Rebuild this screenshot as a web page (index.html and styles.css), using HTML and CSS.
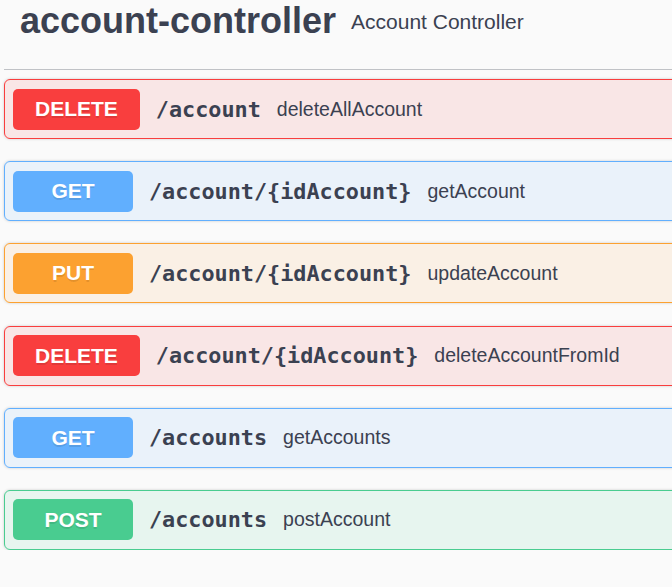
FILE: index.html
```html
<!DOCTYPE html>
<html>
<head>
<meta charset="utf-8">
<link rel="stylesheet" href="styles.css">
</head>
<body>
<div class="tag-section">
  <h4 class="tag-title"><span class="tag-name">account-controller</span><small class="tag-desc">Account Controller</small></h4>
  <div class="ops">
    <div class="op op-delete">
      <span class="method">DELETE</span>
      <span class="path">/account</span>
      <span class="summary">deleteAllAccount</span>
    </div>
    <div class="op op-get">
      <span class="method">GET</span>
      <span class="path">/account/{idAccount}</span>
      <span class="summary">getAccount</span>
    </div>
    <div class="op op-put">
      <span class="method">PUT</span>
      <span class="path">/account/{idAccount}</span>
      <span class="summary">updateAccount</span>
    </div>
    <div class="op op-delete">
      <span class="method">DELETE</span>
      <span class="path">/account/{idAccount}</span>
      <span class="summary">deleteAccountFromId</span>
    </div>
    <div class="op op-get">
      <span class="method">GET</span>
      <span class="path">/accounts</span>
      <span class="summary">getAccounts</span>
    </div>
    <div class="op op-post">
      <span class="method">POST</span>
      <span class="path">/accounts</span>
      <span class="summary">postAccount</span>
    </div>
  </div>
</div>
</body>
</html>
```
FILE: styles.css
```css
html, body {
  margin: 0;
  padding: 0;
  background: #fafafa;
  overflow: hidden;
}
body {
  font-family: "Liberation Sans", Arial, sans-serif;
  color: #3b4151;
}
.tag-section {
  margin-left: 4px;
  width: 740px;
}
.tag-title {
  margin: 0;
  display: flex;
  align-items: flex-start;
  padding: 0 45px 0 16px;
  height: 70px;
  border-bottom: 1px solid rgba(59, 65, 81, 0.3);
  box-sizing: border-box;
}
.tag-name {
  font-size: 36px;
  font-weight: bold;
  line-height: 36px;
  margin-top: 3px;
}
.tag-desc {
  font-size: 21px;
  font-weight: normal;
  line-height: 21px;
  margin-left: 15px;
  margin-top: 11px;
}
.ops {
  display: flex;
  flex-direction: column;
  gap: 22.2px;
  padding-top: 9px;
}
.op {
  display: flex;
  align-items: center;
  height: 58px;
  padding: 0 8px;
  border: 1px solid;
  border-radius: 6px;
  box-shadow: 0 0 3px rgba(0, 0, 0, 0.19);
}
.method {
  min-width: 120px;
  height: 41px;
  box-sizing: border-box;
  padding: 0 22px;
  border-radius: 5px;
  display: flex;
  align-items: center;
  justify-content: center;
  color: #fff;
  font-family: "Liberation Sans", Arial, sans-serif;
  font-weight: bold;
  font-size: 21px;
  text-shadow: 0 1.5px 0 rgba(0, 0, 0, 0.1);
}
.path {
  font-family: "DejaVu Sans Mono", monospace;
  font-weight: bold;
  font-size: 21.8px;
  padding: 0 16px;
  color: #3b4151;
}
.summary {
  font-size: 19.5px;
  color: #3b4151;
}
.op-delete { border-color: #f93e3e; background: rgba(249, 62, 62, 0.1); }
.op-delete .method { background: #f93e3e; }
.op-get { border-color: #61affe; background: rgba(97, 175, 254, 0.1); }
.op-get .method { background: #61affe; }
.op-put { border-color: #fca130; background: rgba(252, 161, 48, 0.1); }
.op-put .method { background: #fca130; }
.op-post { border-color: #49cc90; background: rgba(73, 204, 144, 0.1); }
.op-post .method { background: #49cc90; }
```
